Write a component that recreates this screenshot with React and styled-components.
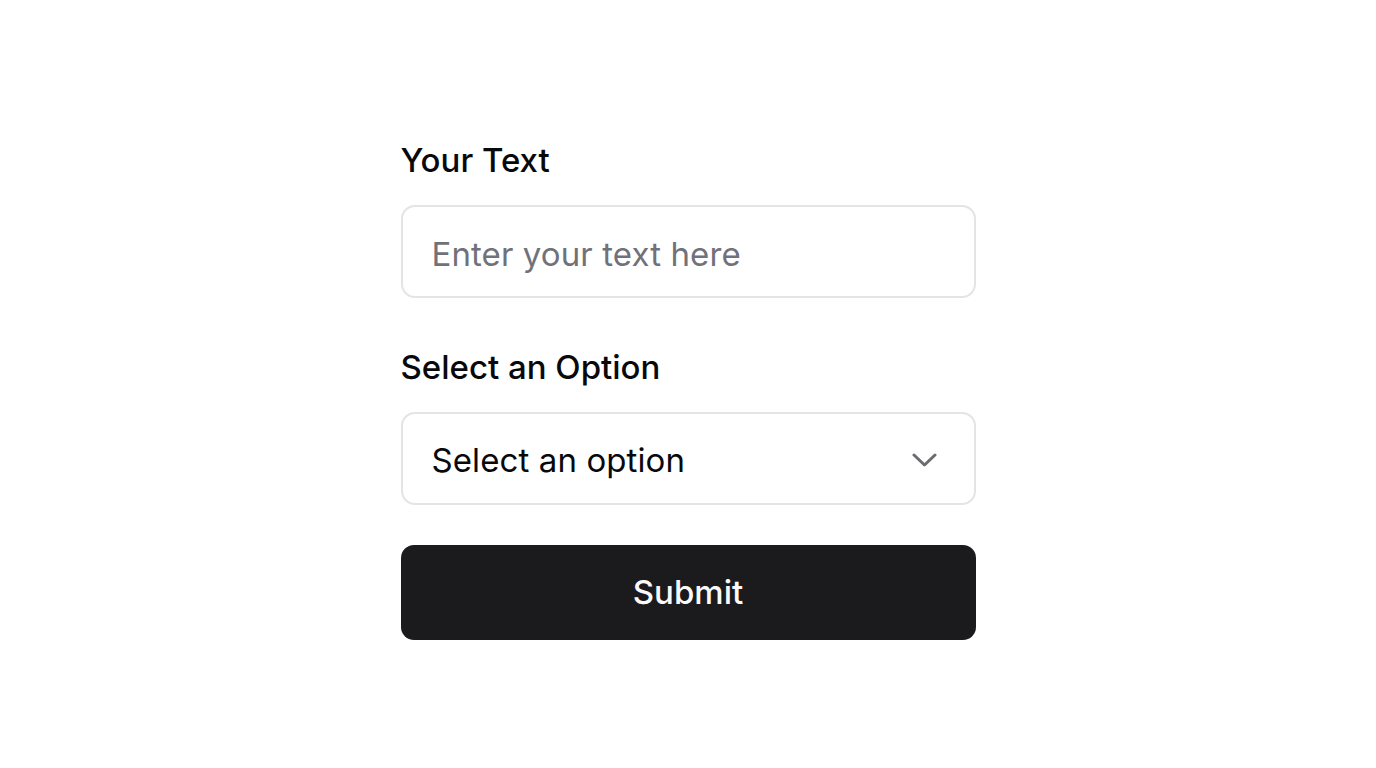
import styled, { createGlobalStyle } from "styled-components";
import { useState } from "react";

const GlobalStyle = createGlobalStyle`
  * { box-sizing: border-box; }
  body {
    margin: 0;
    background: #ffffff;
    font-family: Inter, "Noto Sans", "Liberation Sans", sans-serif;
    color: #09090b;
  }
`

const Page = styled.div`
  display: flex;
  justify-content: center;
  padding-top: 138px;
  min-height: 100vh;
`

const Form = styled.form`
  width: 575px;
  display: flex;
  flex-direction: column;
`

const Field = styled.div`
  display: flex;
  flex-direction: column;
  margin-bottom: ${props => props.gap}px;
`

const Label = styled.label`
  font-size: 33px;
  line-height: 45px;
  font-weight: 500;
  color: #09090b;
  margin-bottom: 22px;
`

const TextInput = styled.input`
  height: 93px;
  width: 100%;
  border: 2px solid #e4e4e7;
  border-radius: 14px;
  padding: 4px 29px 0;
  font-family: inherit;
  font-size: 33px;
  letter-spacing: 0.1px;
  color: #09090b;
  background: #fff;
  outline: none;
  &::placeholder {
    color: #71717a;
  }
`

const SelectBox = styled.div`
  height: 93px;
  border: 2px solid #e4e4e7;
  border-radius: 14px;
  display: flex;
  align-items: center;
  justify-content: space-between;
  padding: 3px 37px 0 29px;
  font-size: 33px;
  letter-spacing: 0.1px;
  color: #09090b;
  background: #fff;
`

const Chevron = styled.svg`
  width: 25px;
  height: 14px;
  color: #6b6b70;
`

const SubmitButton = styled.button`
  height: 95px;
  padding-bottom: 2px;
  border: none;
  border-radius: 13px;
  background: #1b1b1d;
  color: #fafafa;
  font-family: inherit;
  font-size: 33px;
  font-weight: 500;
  cursor: pointer;
`

function App() {
    const [text, setText] = useState("")

    return (
        <Page>
            <GlobalStyle />
            <Form onSubmit={e => e.preventDefault()}>
                <Field gap={47}>
                    <Label htmlFor="your-text">Your Text</Label>
                    <TextInput
                        id="your-text"
                        placeholder="Enter your text here"
                        value={text}
                        onChange={e => setText(e.target.value)}
                    />
                </Field>
                <Field gap={40}>
                    <Label>Select an Option</Label>
                    <SelectBox>
                        <span>Select an option</span>
                        <Chevron viewBox="0 0 25 14" fill="none">
                            <path d="M2 2 L12.5 12 L23 2" stroke="currentColor" strokeWidth="3" strokeLinecap="round" strokeLinejoin="round" />
                        </Chevron>
                    </SelectBox>
                </Field>
                <SubmitButton type="submit">Submit</SubmitButton>
            </Form>
        </Page>
    )
}

export default App
